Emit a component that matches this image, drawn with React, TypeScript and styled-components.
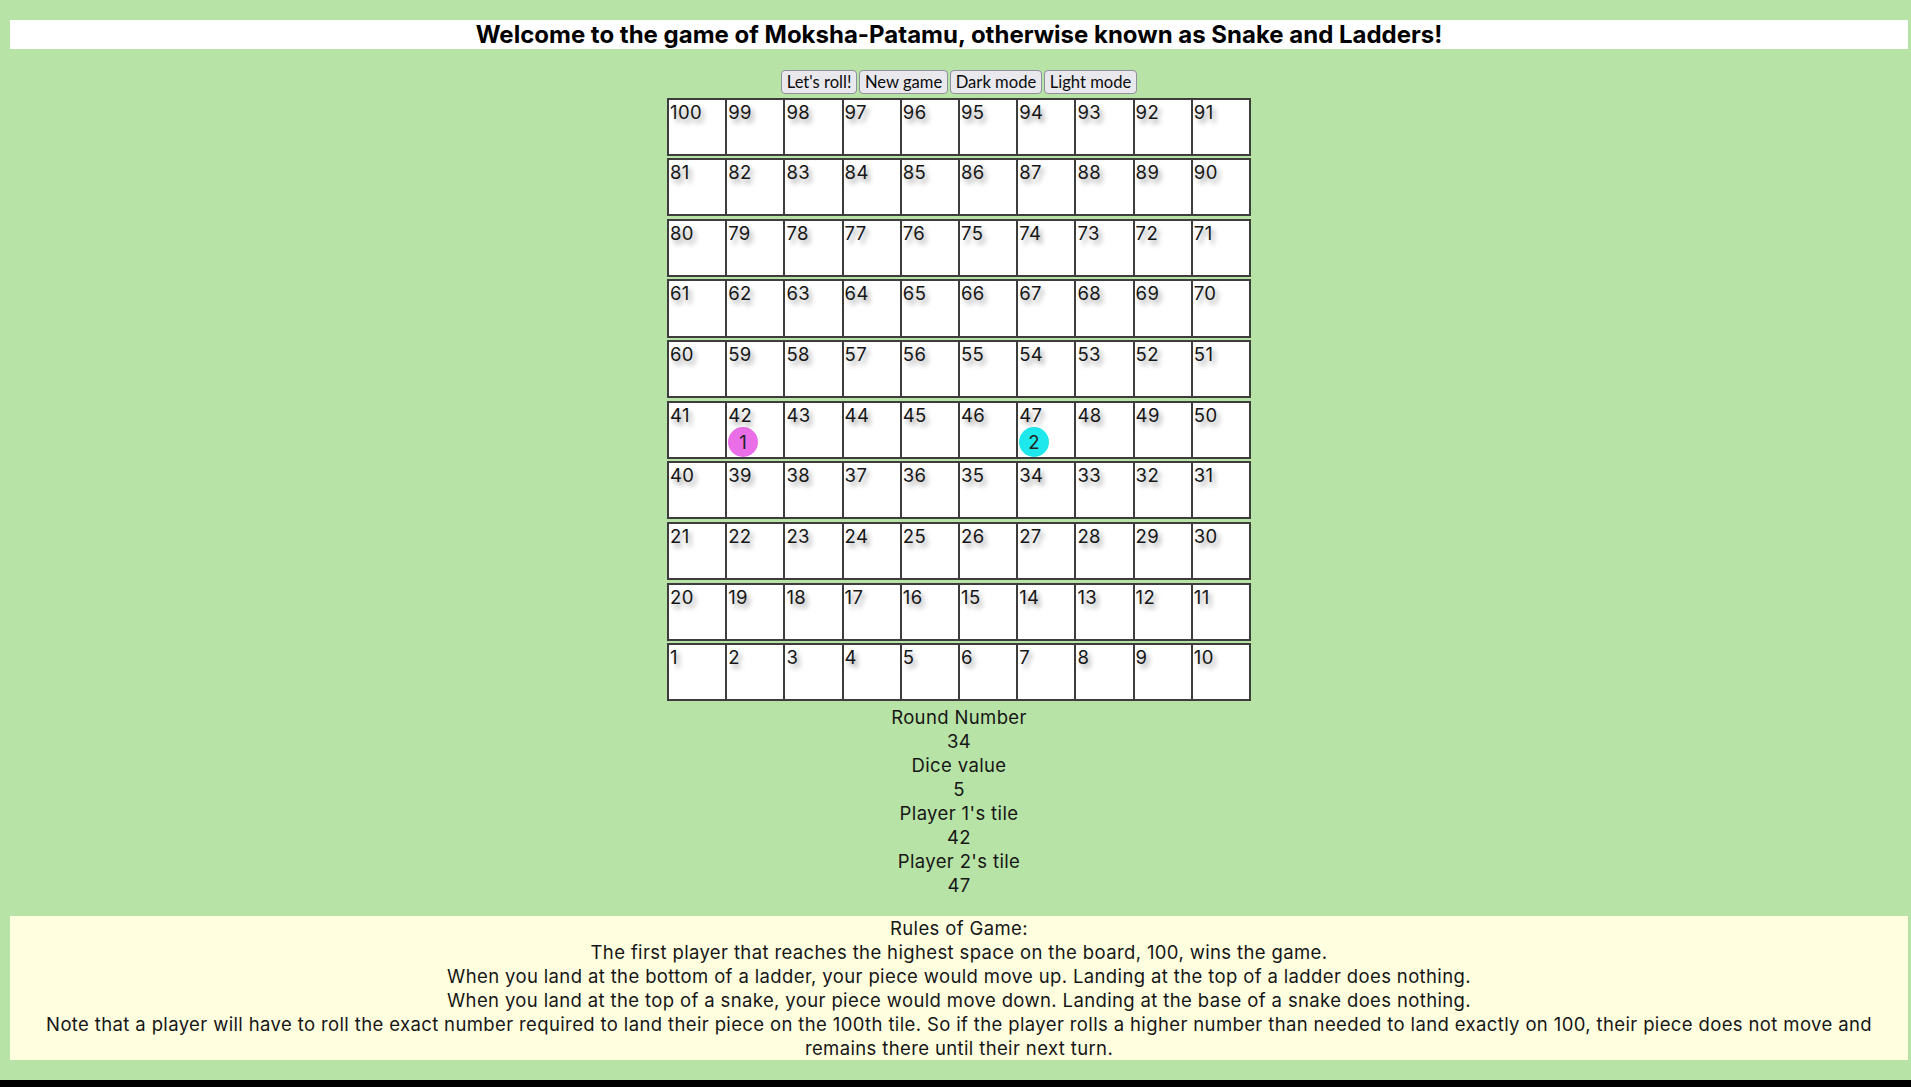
import React from "react";
import styled, { createGlobalStyle } from "styled-components";

const GlobalStyle = createGlobalStyle`
  html { background: #000; }
  body {
    margin: 0;
    font-family: Inter, "Noto Sans", Arial, sans-serif;
    color: #111;
  }
`;

const Page = styled.div`
  background: #b8e3a6;
  padding: 20px 3px 20px 10px;
  display: flex;
  flex-direction: column;
`;

const Title = styled.h2`
  margin: 0;
  background: #fff;
  font: 700 24px/29px Inter, Arial, sans-serif;
  text-align: center;
  color: #000;
`;

const Controls = styled.div`
  display: flex;
  justify-content: center;
  gap: 1.5px;
  margin-top: 21px;
`;

const Button = styled.button`
  height: 23.5px;
  box-sizing: border-box;
  padding: 0 5px;
  font: 400 16.6px Lato, "Noto Sans", Arial, sans-serif;
  color: #0c0c0c;
  background: #e9e9ed;
  border: 1px solid #8f8f9d;
  border-radius: 4px;
  line-height: 20px;
`;

const Board = styled.div`
  align-self: center;
  width: 584px;
  margin-top: 4px;
  display: flex;
  flex-direction: column;
  gap: 2.45px;
`;

const Row = styled.div`
  display: grid;
  grid-template-columns: repeat(10, 1fr);
  gap: 2px;
  padding: 2px;
  height: 58.2px;
  box-sizing: border-box;
  background: #3d3d3d;
`;

const textFont = `
  font-family: Inter, Arial, sans-serif;
  font-weight: 400;
  font-size: 18.5px;
  line-height: 24px;
  letter-spacing: 0.37px;
  color: #161616;
`;

const Cell = styled.div`
  background: #fff;
  padding: 0 1px;
  ${textFont}
  overflow: hidden;
`;

const Num = styled.div`
  text-shadow: 3px 4px 5px rgba(0, 0, 0, 0.38);
`;

const Token = styled.div<{ $color: string }>`
  width: 30px;
  height: 30px;
  border-radius: 50%;
  background: ${(p) => p.$color};
  text-align: center;
  line-height: 30px;
  color: #222;
`;

const Stats = styled.div`
  margin-top: 3.7px;
  text-align: center;
  ${textFont}
`;

const Rules = styled.div`
  margin-top: 19px;
  background: #ffffe0;
  text-align: center;
  ${textFont}
`;

const players: Record<number, { id: number; color: string }> = {
  42: { id: 1, color: "#ea6ee8" },
  47: { id: 2, color: "#1ee8ec" },
};

function rowNumbers(r: number): number[] {
  const base = (9 - r) * 10;
  const nums = Array.from({ length: 10 }, (_, i) => base + i + 1);
  return r % 2 === 0 ? nums.reverse() : nums;
}

export default function App() {
  return (
    <>
      <GlobalStyle />
      <Page>
        <Title>Welcome to the game of Moksha-Patamu, otherwise known as Snake and Ladders!</Title>
        <Controls>
          <Button>Let's roll!</Button>
          <Button>New game</Button>
          <Button>Dark mode</Button>
          <Button>Light mode</Button>
        </Controls>
        <Board>
          {Array.from({ length: 10 }, (_, r) => (
            <Row key={r}>
              {rowNumbers(r).map((n) => (
                <Cell key={n}>
                  <Num>{n}</Num>
                  {players[n] && <Token $color={players[n].color}>{players[n].id}</Token>}
                </Cell>
              ))}
            </Row>
          ))}
        </Board>
        <Stats>
          <div>Round Number</div>
          <div>34</div>
          <div>Dice value</div>
          <div>5</div>
          <div>Player 1's tile</div>
          <div>42</div>
          <div>Player 2's tile</div>
          <div>47</div>
        </Stats>
        <Rules>
          <div>Rules of Game:</div>
          <div>The first player that reaches the highest space on the board, 100, wins the game.</div>
          <div>When you land at the bottom of a ladder, your piece would move up. Landing at the top of a ladder does nothing.</div>
          <div>When you land at the top of a snake, your piece would move down. Landing at the base of a snake does nothing.</div>
          <div>
            Note that a player will have to roll the exact number required to land their piece on the 100th tile. So if the
            player rolls a higher number than needed to land exactly on 100, their piece does not move and remains there until
            their next turn.
          </div>
        </Rules>
      </Page>
    </>
  );
}
